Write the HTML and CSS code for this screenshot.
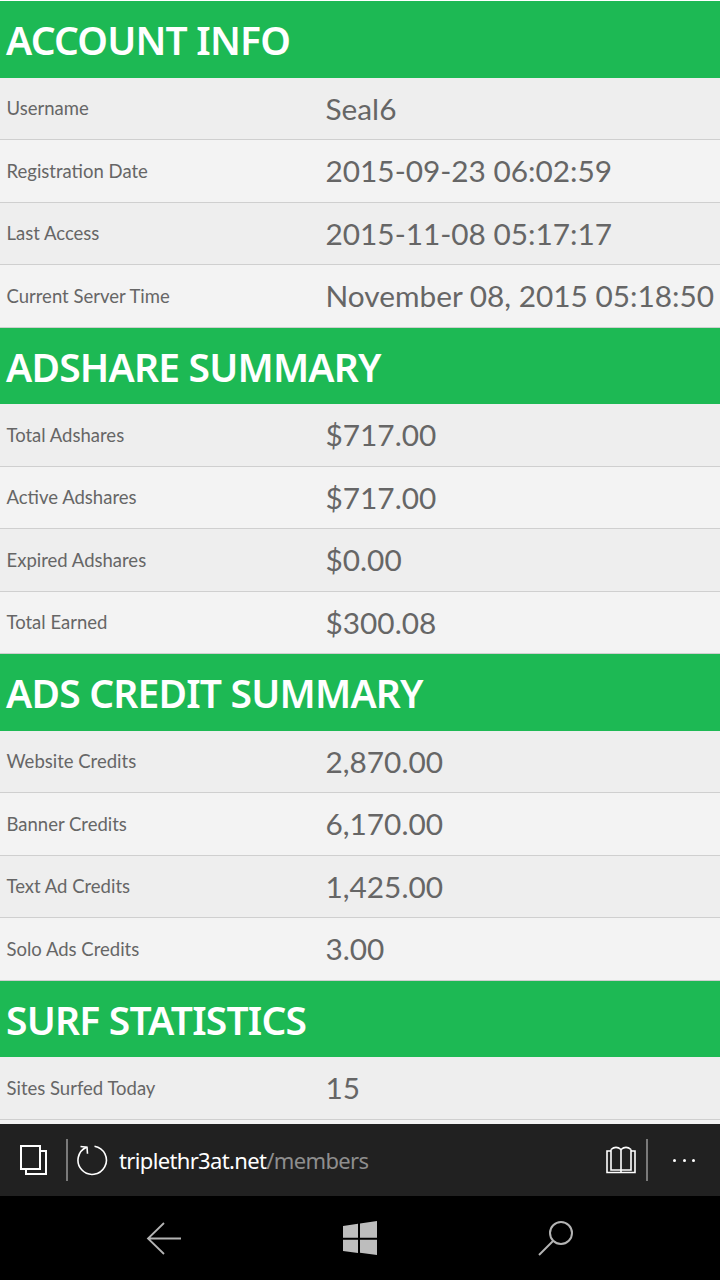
FILE: index.html
```html
<!DOCTYPE html>
<html lang="en">
<head>
<meta charset="utf-8">
<title>Members</title>
<link rel="stylesheet" href="styles.css">
</head>
<body>
<div class="screen">
  <main class="content">
    <section>
      <h2 class="heading">ACCOUNT INFO</h2>
      <div class="row"><span class="label">Username</span><span class="value">Seal6</span></div>
      <div class="row"><span class="label">Registration Date</span><span class="value">2015-09-23 06:02:59</span></div>
      <div class="row"><span class="label">Last Access</span><span class="value">2015-11-08 05:17:17</span></div>
      <div class="row"><span class="label">Current Server Time</span><span class="value">November 08, 2015 05:18:50</span></div>
    </section>
    <section>
      <h2 class="heading">ADSHARE SUMMARY</h2>
      <div class="row"><span class="label">Total Adshares</span><span class="value">$717.00</span></div>
      <div class="row"><span class="label">Active Adshares</span><span class="value">$717.00</span></div>
      <div class="row"><span class="label">Expired Adshares</span><span class="value">$0.00</span></div>
      <div class="row"><span class="label">Total Earned</span><span class="value">$300.08</span></div>
    </section>
    <section>
      <h2 class="heading">ADS CREDIT SUMMARY</h2>
      <div class="row"><span class="label">Website Credits</span><span class="value">2,870.00</span></div>
      <div class="row"><span class="label">Banner Credits</span><span class="value">6,170.00</span></div>
      <div class="row"><span class="label">Text Ad Credits</span><span class="value">1,425.00</span></div>
      <div class="row"><span class="label">Solo Ads Credits</span><span class="value">3.00</span></div>
    </section>
    <section>
      <h2 class="heading">SURF STATISTICS</h2>
      <div class="row"><span class="label">Sites Surfed Today</span><span class="value">15</span></div>
      <div class="row"></div>
    </section>
  </main>
  <div class="addressbar">
    <svg class="tabs" width="30" height="32" viewBox="0 0 30 32" fill="none" stroke="#fff" stroke-width="2"><path d="M3 2h19v23H3z"/><path d="M22 7h6v23H8v-5"/></svg>
    <span class="divider"></span>
    <svg class="refresh" width="32" height="32" viewBox="0 0 32 32" fill="none" stroke="#fff" stroke-width="1.6"><path d="M10.500 3.200A14.200 14.200 0 1 0 18.500 2.200"/><path d="M4.500 2.500l6.500 .7.500 6.500"/></svg>
    <span class="url">triplethr3at.net<span class="path">/members</span></span>
    <svg class="book" width="30" height="28" viewBox="0 0 30 28" fill="none" stroke="#fff" stroke-width="1.600"><path d="M5 3.500v20.500h20V3.500"/><path d="M5 3.500C8 1 12 1 15 3.500c3-2.500 7-2.500 10 0"/><path d="M15 3.500V26.500"/><path d="M5 5H1v21.500h28V5h-4"/></svg>
    <span class="divider"></span>
    <span class="more"><i></i><i></i><i></i></span>
  </div>
  <nav class="navbar">
    <svg width="36" height="34" viewBox="0 0 36 34" fill="none" stroke="#b4b4b4" stroke-width="1.800"><path d="M18 2L2 17.500 18 33M2 17.500h33"/></svg>
    <svg width="34" height="34" viewBox="0 0 34 34" fill="#bdbdbd"><path d="M0 5l15-2.300v14H0zM17 2.400L34 0v16.700H17zM0 18.700h15V32L0 30zM17 18.700h17V34l-17-2.300z"/></svg>
    <svg width="36" height="36" viewBox="0 0 36 36" fill="none" stroke="#b4b4b4" stroke-width="2"><circle cx="23" cy="13" r="11"/><path d="M15 21L1 35"/></svg>
  </nav>
</div>
</body>
</html>
```

FILE: styles.css
```css
* { box-sizing: border-box; }
html, body { margin: 0; padding: 0; background: #fff; }
.screen {
  width: 720px;
  height: 1280px;
  display: flex;
  flex-direction: column;
  overflow: hidden;
  font-family: "Lato", "Open Sans", sans-serif;
}
.content { flex: 1; min-height: 0; overflow: hidden; padding-top: 1px; }
.heading {
  margin: 0;
  height: 76.5px;
  padding: 0 7px 0 6px;
  background: #1db954;
  color: #fff;
  font-family: "Noto Sans", sans-serif;
  font-size: 39px;
  font-weight: 600;
  line-height: 78px;
  letter-spacing: -0.8px;
  white-space: nowrap;
}
.row {
  height: 62.5px;
  display: grid;
  grid-template-columns: 319px 1fr;
  align-items: center;
  padding-left: 6.500px;
  border-bottom: 1px solid #cfcfcf;
  background: #eeeeee;
  color: #666;
  white-space: nowrap;
}
.row:nth-of-type(even) { background: #f3f3f3; }
.heading + .row { background: #eeeeee; }
.label { font-size: 18.500px; }
.value { font-size: 29.800px; }
.addressbar {
  height: 72px;
  flex: none;
  background: #212121;
  display: flex;
  align-items: center;
  color: #fff;
}
.divider { width: 2px; height: 42px; background: #7a7a7a; flex: none; }
.tabs { margin: 0 18px 0 18px; }
.refresh { margin-left: 8px; }
.url { font-size: 22px; margin-left: 11px; flex: 1; font-family: "Noto Sans", sans-serif; letter-spacing: -0.65px; }
.path { color: #8e8e8e; }
.book { margin-right: 10px; }
.more { display: flex; gap: 6.500px; margin: 0 25px 0 25px; }
.more i { width: 3px; height: 3px; border-radius: 50%; background: #fff; display: block; }
.navbar {
  height: 84px;
  flex: none;
  background: #000;
  display: flex;
  align-items: center;
  padding: 0 146px;
  justify-content: space-between;
}
```
